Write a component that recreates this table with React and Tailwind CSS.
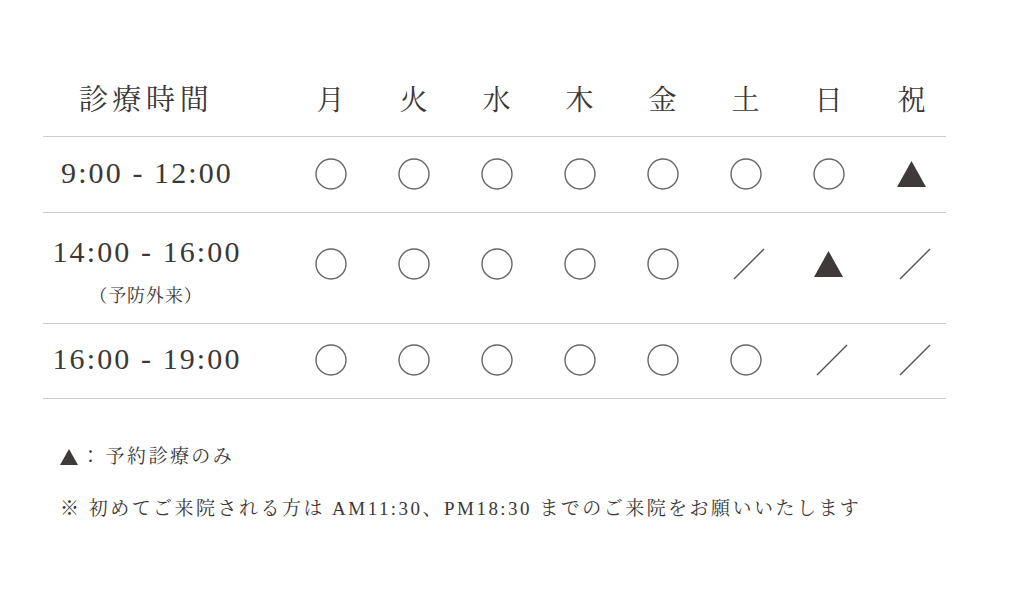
import React from "react";

const days = ["月", "火", "水", "木", "金", "土", "日", "祝"];

const rows = [
  { time: "9:00 - 12:00", marks: ["o", "o", "o", "o", "o", "o", "o", "t"], h: "h-[76px]" },
  { time: "14:00 - 16:00", note: "（予防外来）", marks: ["o", "o", "o", "o", "o", "s", "t", "s"], h: "h-[111px]" },
  { time: "16:00 - 19:00", marks: ["o", "o", "o", "o", "o", "o", "s", "s"], h: "h-[75px]" },
];

function Mark({ type }) {
  if (type === "o") {
    return (
      <svg width="32" height="32" viewBox="0 0 32 32">
        <circle cx="16" cy="16" r="15" fill="none" stroke="#666" strokeWidth="1.4" />
      </svg>
    );
  }
  if (type === "t") {
    return (
      <svg width="29" height="26" viewBox="0 0 29 26">
        <polygon points="14.5,0 29,26 0,26" fill="#3d3a39" />
      </svg>
    );
  }
  return (
    <svg width="32" height="32" viewBox="0 0 32 32" className="ml-[6px]">
      <line x1="1" y1="31" x2="31" y2="1" stroke="#555" strokeWidth="1.4" />
    </svg>
  );
}

export default function App() {
  const font = { fontFamily: '"Liberation Serif", "Noto Serif CJK JP", "Noto Sans CJK JP", serif' };
  return (
    <div className="w-[1024px] h-[608px] bg-white text-[#3b3838] pt-[65px] pl-[43px]" style={font}>
      <div className="w-[903px]">
        {/* header */}
        <div className="grid grid-cols-[246px_repeat(8,83px)] h-[72px] items-center border-b border-[#cccccc]">
          <div className="pr-[44px] text-center text-[29px] tracking-[0.16em] pl-[4px]">診療時間</div>
          {days.map((d) => (
            <div key={d} className="text-center text-[28px]">{d}</div>
          ))}
        </div>

        {rows.map((r) => (
          <div key={r.time} className={`grid grid-cols-[246px_repeat(8,83px)] ${r.h} items-center border-b border-[#cccccc]`}>
            <div className={`pr-[40px] flex flex-col items-center ${r.note ? "pt-[6px]" : "pb-[4px]"}`}>
              <div className="text-[30px] tracking-[0.07em] leading-none pl-[2px]">{r.time}</div>
              {r.note && <div className="text-[18px] tracking-[0.05em] mt-[20px] leading-none">{r.note}</div>}
            </div>
            {r.marks.map((m, i) => (
              <div key={i} className={`flex justify-center ${r.note ? "pb-[8px]" : "pb-[2px]"}`}>
                <Mark type={m} />
              </div>
            ))}
          </div>
        ))}

        {/* notes */}
        <div className="pl-[17px] pt-[47px] text-[19px] tracking-[0.13em] flex flex-col gap-[30px] leading-[22px]">
          <div className="flex items-center">
            <svg width="18" height="16" viewBox="0 0 18 16" className="mr-[3px]">
              <polygon points="9,0 18,16 0,16" fill="#3d3a39" />
            </svg>
            <span>：</span>
            <span className="ml-[3px]">予約診療のみ</span>
          </div>
          <div>※ 初めてご来院される方は AM11:30、PM18:30 までのご来院をお願いいたします</div>
        </div>
      </div>
    </div>
  );
}
